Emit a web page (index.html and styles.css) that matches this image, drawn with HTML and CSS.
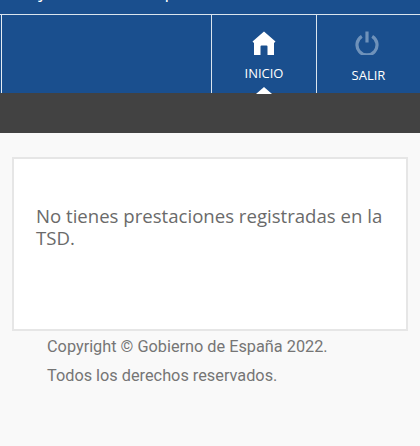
FILE: index.html
```html
<!DOCTYPE html>
<html lang="es">
<head>
<meta charset="utf-8">
<title>Inicio</title>
<link rel="stylesheet" href="styles.css">
</head>
<body>
<header class="header">
  <div class="title-clip"><span class="title">Tarjeta Social de prestaciones</span></div>
  <nav class="nav">
    <div class="nav-blank"></div>
    <a class="nav-item nav-home">
      <svg class="icon-home" viewBox="0 0 24 24" width="24" height="24"><path d="M12 0.5 L23.5 10.5 L22 12 V24 H15.5 V15.5 Q15.5 14.5 14.5 14.5 H9.5 Q8.5 14.5 8.5 15.5 V24 H2 V12 L0.5 10.5 Z" fill="#fff"/></svg>
      <span class="nav-label">INICIO</span>
      <span class="caret"></span>
    </a>
    <a class="nav-item nav-exit">
      <svg class="icon-power" viewBox="0 0 24 24" width="24" height="24"><path d="M6.8 5.4 A10 10 0 1 0 17.2 5.4" fill="none" stroke="#6f92ba" stroke-width="3.2"/><path d="M12 0.5 V11.5" stroke="#6f92ba" stroke-width="3.2" fill="none"/></svg>
      <span class="nav-label">SALIR</span>
    </a>
  </nav>
</header>
<div class="band"></div>
<main class="main">
  <section class="card">
    <p class="message">No tienes prestaciones registradas en la TSD.</p>
  </section>
  <footer class="footer">
    <p>Copyright © Gobierno de España 2022.</p>
    <p>Todos los derechos reservados.</p>
  </footer>
</main>
</body>
</html>
```
FILE: styles.css
```css
* { box-sizing: border-box; }
html, body { margin: 0; padding: 0; }
body { width: 420px; height: 446px; overflow: hidden; background: #f9f9f9; font-family: "Open Sans", sans-serif; }
.header { background: #1a4f8e; height: 93px; }
.title-clip { height: 14px; overflow: hidden; padding-left: 12px; }
.title { display: block; color: #fff; font-size: 18px; line-height: 18px; margin-top: -18px; word-spacing: 3.5px; white-space: nowrap; }
.nav { display: flex; height: 79px; border-top: 1px solid #dbe5ee; padding-left: 1px; }
.nav-blank { width: 210px; border-left: 1px solid #e6edf3; }
.nav-item { position: relative; display: flex; flex-direction: column; align-items: center; color: #fff; border-left: 1px solid #dbe5ee; }
.nav-home { width: 105px; padding-top: 16px; }
.nav-exit { width: 104px; padding-top: 16px; }
.icon-power { margin-right: 3px; }
.nav-label { font-size: 13px; line-height: 18px; }
.nav-home .nav-label { margin-top: 9px; }
.nav-exit .nav-label { margin-top: 11px; }
.caret { position: absolute; bottom: -1px; left: 50%; margin-left: -8.5px; border-left: 8.5px solid transparent; border-right: 8.5px solid transparent; border-bottom: 7px solid #fff; }
.band { height: 40px; background: #424242; }
.main { padding: 24px 12px 0; }
.card { height: 174px; background: #fff; border: 2px solid #e6e6e6; padding: 46px 22px 0; }
.message { margin: 0; font-size: 18.6px; line-height: 22px; color: #6a6a6a; }
.footer { padding: 1px 0 0 35px; font-family: Roboto, sans-serif; font-size: 16.3px; color: #757575; }
.footer p { margin: 0; line-height: 29px; }
```
